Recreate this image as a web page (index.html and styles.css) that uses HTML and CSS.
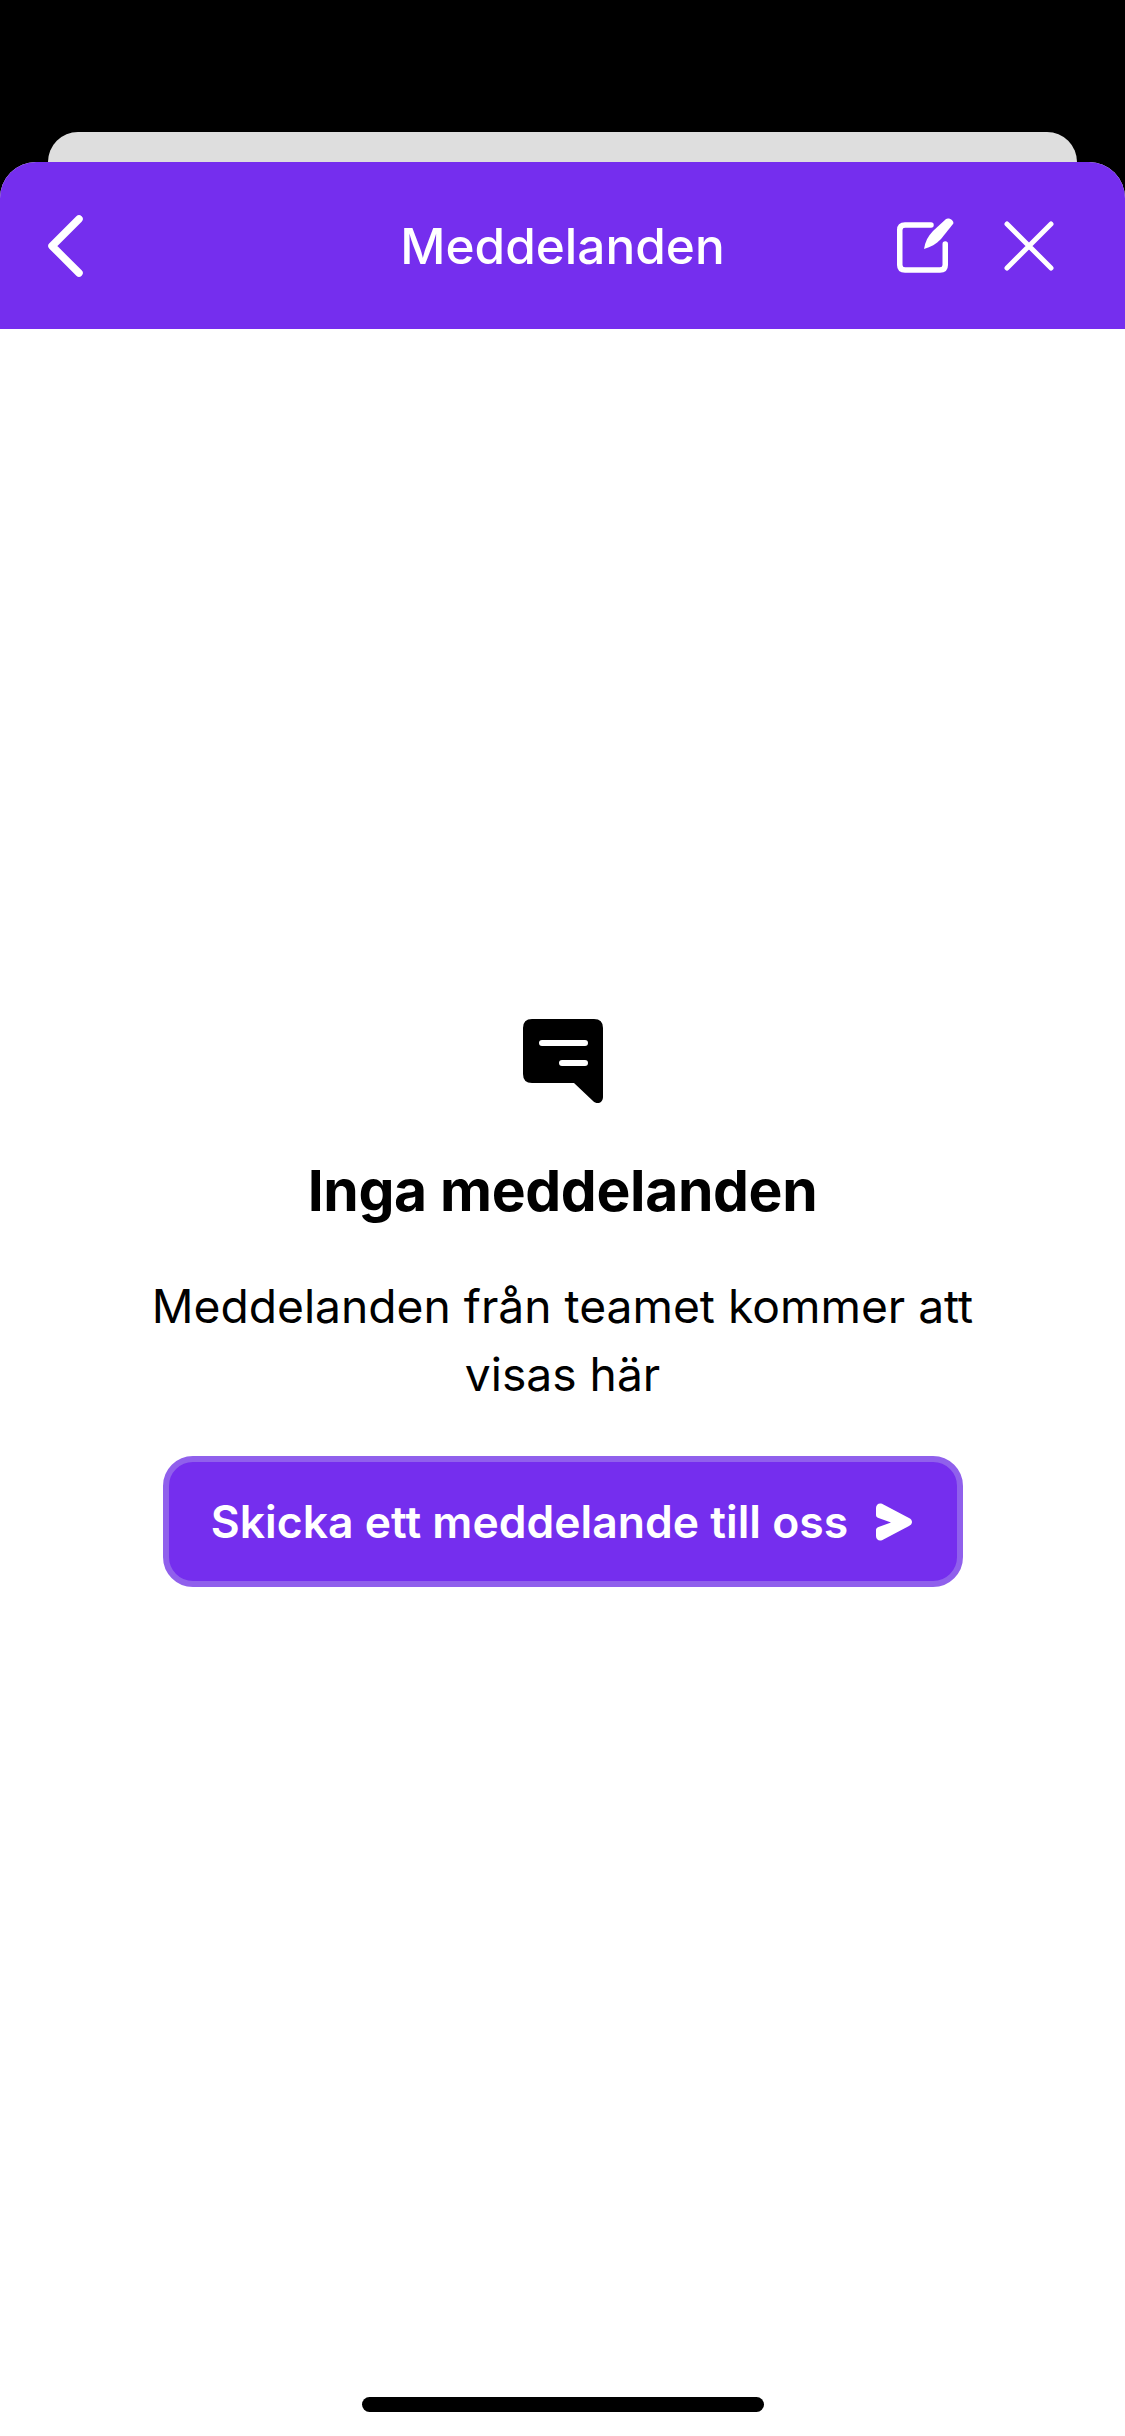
FILE: index.html
```html
<!DOCTYPE html>
<html lang="sv">
<head>
<meta charset="utf-8">
<title>Meddelanden</title>
<link rel="stylesheet" href="styles.css">
</head>
<body>
<div class="screen">
  <div class="back-card"></div>
  <div class="sheet">
    <header class="header">
      <button class="icon-btn back" aria-label="Tillbaka">
        <svg width="40" height="64" viewBox="0 0 40 64"><path d="M33 5 L6 32 L33 59" fill="none" stroke="#fff" stroke-width="7.5" stroke-linecap="round" stroke-linejoin="round"/></svg>
      </button>
      <h1 class="title">Meddelanden</h1>
      <div class="actions">
        <button class="icon-btn" aria-label="Nytt meddelande">
          <svg width="60" height="56" viewBox="0 0 60 56"><path d="M36 7 H10 Q4.750 7 4.750 12 V47 Q4.750 52 10 52 H45 Q50.250 52 50.250 47 V26" fill="none" stroke="#fff" stroke-width="5.5" stroke-linecap="round"/><path d="M51 1 C54 -1 60 3 58 6 L46 21 C41 26 36 29 29 31 C30 24 33 18 38 13 Z" fill="#fff"/></svg>
        </button>
        <button class="icon-btn" aria-label="Stäng">
          <svg width="52" height="52" viewBox="0 0 52 52"><path d="M4 4 L48 48 M48 4 L4 48" fill="none" stroke="#fff" stroke-width="5" stroke-linecap="round"/></svg>
        </button>
      </div>
    </header>
    <main class="empty">
      <svg class="chat" width="82" height="87" viewBox="0 0 82 87"><path d="M10 1 H72 Q81 1 81 10 V79 C81 85 75 87 71 83 L52 65 H10 Q1 65 1 56 V10 Q1 1 10 1 Z" fill="#000"/><path d="M20 25 H63 M40 45 H63" fill="none" stroke="#fff" stroke-width="6" stroke-linecap="round"/></svg>
      <h2 class="empty-title">Inga meddelanden</h2>
      <p class="empty-text">Meddelanden från teamet kommer att<br>visas här</p>
      <button class="cta">
        <span>Skicka ett meddelande till oss</span>
        <svg width="36" height="38" viewBox="0 0 36 38"><path d="M6 .8 L33 15 C37 17 37 21 33 23 L6 37.200 C3 38.500 0 36.500 0 33 V27 C0 25.500 1 24.500 2.500 24 L15 19.500 L2.500 15 C1 14.500 0 13.500 0 12 V5 C0 1.500 3 -.5 6 .8 Z" fill="#fff"/></svg>
      </button>
    </main>
    <div class="home-bar"><span class="home-indicator"></span></div>
  </div>
</div>
</body>
</html>
```
FILE: styles.css
```css
* { box-sizing: border-box; }
html, body { margin: 0; padding: 0; background: #000; }
body { font-family: Inter, "Liberation Sans", sans-serif; }
.screen {
  width: 1125px;
  height: 2436px;
  padding-top: 132px;
  display: flex;
  flex-direction: column;
  background: #000;
  overflow: hidden;
}
.back-card {
  flex: none;
  height: 30px;
  margin: 0 48px;
  background: #dedede;
  border-radius: 30px 30px 0 0;
}
.sheet {
  flex: 1;
  display: flex;
  flex-direction: column;
  background: #fff;
  border-radius: 36px 36px 0 0;
  overflow: hidden;
}
.header {
  flex: none;
  height: 167px;
  display: flex;
  align-items: center;
  justify-content: space-between;
  padding: 0 70px 0 46px;
  background: #752eee;
  color: #fff;
  position: relative;
}
.title {
  margin: 0;
  font-size: 49.500px;
  font-weight: 550;
  line-height: 56px;
  position: absolute;
  left: 0;
  right: 0;
  text-align: center;
}
.actions { display: flex; align-items: center; gap: 48px; position: relative; }
.icon-btn {
  display: flex;
  padding: 0;
  border: 0;
  background: none;
  position: relative;
}
.empty {
  flex: none;
  display: flex;
  flex-direction: column;
  align-items: center;
  padding-top: 689px;
}
.chat { display: block; }
.empty-title {
  margin: 51px 0 0;
  font-size: 57px;
  font-weight: 700;
  line-height: 70px;
  color: #000;
  letter-spacing: -0.35px;
}
.empty-text {
  margin: 46px 0 0;
  font-size: 46.200px;
  font-weight: 400;
  line-height: 68px;
  color: #000;
  text-align: center;
}
.cta {
  margin-top: 48px;
  width: 800px;
  height: 131px;
  display: flex;
  align-items: center;
  justify-content: center;
  gap: 28px;
  background: #752eee;
  border: 6px solid #9060ec;
  border-radius: 30px;
  color: #fff;
  font-family: inherit;
  font-size: 44.500px;
  font-weight: 580;
  padding: 0 2px 0 0;
}
.home-bar {
  margin-top: auto;
  display: flex;
  justify-content: center;
  padding-bottom: 24px;
}
.home-indicator {
  width: 402px;
  height: 15px;
  background: #000;
  border-radius: 8px;
}
```
